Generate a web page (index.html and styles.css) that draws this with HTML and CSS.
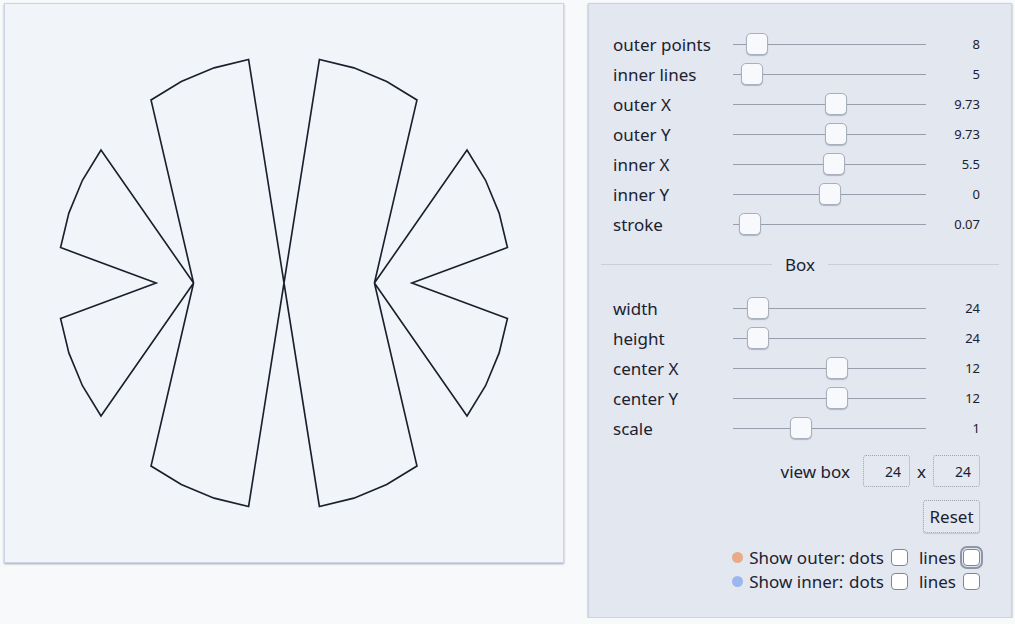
FILE: index.html
```html
<!DOCTYPE html>
<html lang="en">
<head>
<meta charset="utf-8">
<title>Star shape</title>
<link rel="stylesheet" href="styles.css">
</head>
<body>
<div class="app">
  <section class="canvas">
    <svg class="drawing" viewBox="0 0 24 24" xmlns="http://www.w3.org/2000/svg">
      <path class="shape" d="M12,12 L13.5221,2.3898 L15.0068,2.7462 L16.4173,3.3305 L17.7192,4.1282 L15.8891,12 L19.8718,6.2808 L20.6695,7.5827 L21.2538,8.9932 L21.6102,10.4779 L17.5,12 L21.6102,13.5221 L21.2538,15.0068 L20.6695,16.4173 L19.8718,17.7192 L15.8891,12 L17.7192,19.8718 L16.4173,20.6695 L15.0068,21.2538 L13.5221,21.6102 L12,12 L10.4779,21.6102 L8.9932,21.2538 L7.5827,20.6695 L6.2808,19.8718 L8.1109,12 L4.1282,17.7192 L3.3305,16.4173 L2.7462,15.0068 L2.3898,13.5221 L6.5,12 L2.3898,10.4779 L2.7462,8.9932 L3.3305,7.5827 L4.1282,6.2808 L8.1109,12 L6.2808,4.1282 L7.5827,3.3305 L8.9932,2.7462 L10.4779,2.3898 Z"/>
    </svg>
  </section>

  <aside class="controls">
    <div class="group">
      <label class="row"><span class="name">outer points</span><input class="slider" type="range" min="3" max="69" value="8"><span class="val">8</span></label>
      <label class="row"><span class="name">inner lines</span><input class="slider" type="range" min="3" max="45" value="5"><span class="val">5</span></label>
      <label class="row"><span class="name">outer X</span><input class="slider" type="range" min="0" max="18" step="0.01" value="9.73"><span class="val">9.73</span></label>
      <label class="row"><span class="name">outer Y</span><input class="slider" type="range" min="0" max="18" step="0.01" value="9.73"><span class="val">9.73</span></label>
      <label class="row"><span class="name">inner X</span><input class="slider" type="range" min="0" max="10.5" step="0.1" value="5.5"><span class="val">5.5</span></label>
      <label class="row"><span class="name">inner Y</span><input class="slider" type="range" min="-12" max="12" step="0.1" value="0"><span class="val">0</span></label>
      <label class="row"><span class="name">stroke</span><input class="slider" type="range" min="0" max="2" step="0.01" value="0.07"><span class="val">0.07</span></label>
    </div>

    <div class="divider"><span>Box</span></div>

    <div class="group">
      <label class="row"><span class="name">width</span><input class="slider" type="range" min="0" max="300" value="24"><span class="val">24</span></label>
      <label class="row"><span class="name">height</span><input class="slider" type="range" min="0" max="300" value="24"><span class="val">24</span></label>
      <label class="row"><span class="name">center X</span><input class="slider" type="range" min="0" max="22" value="12"><span class="val">12</span></label>
      <label class="row"><span class="name">center Y</span><input class="slider" type="range" min="0" max="22" value="12"><span class="val">12</span></label>
      <label class="row"><span class="name">scale</span><input class="slider" type="range" min="0" max="3" step="0.1" value="1"><span class="val">1</span></label>
    </div>

    <div class="viewbox">
      <span class="vb-label">view box</span>
      <input class="num" type="text" value="24">
      <span class="times">x</span>
      <input class="num" type="text" value="24">
    </div>

    <div class="actions">
      <button class="reset" type="button">Reset</button>
    </div>

    <div class="toggles">
      <span class="dot dot-outer"></span><span class="t-label">Show outer:</span><span class="t-word">dots</span><input class="check" type="checkbox"><span class="t-word t-lines">lines</span><input class="check focused" type="checkbox">
      <span class="dot dot-inner"></span><span class="t-label">Show inner:</span><span class="t-word">dots</span><input class="check" type="checkbox"><span class="t-word t-lines">lines</span><input class="check" type="checkbox">
    </div>
  </aside>
</div>
</body>
</html>
```

FILE: styles.css
```css
* { box-sizing: border-box; }

html, body {
  margin: 0;
  padding: 0;
  background: #f8f9fb;
  font-family: "Noto Sans", "Open Sans", sans-serif;
  color: #1c2130;
}

.app {
  display: flex;
  align-items: flex-start;
  gap: 24px;
  padding: 3px 0 0 4px;
}

.canvas {
  width: 560px;
  height: 560px;
  background: #f1f4f9;
  border: 1px solid #cbd4e2;
  box-shadow: 0 1px 2px rgba(60, 66, 80, 0.45);
}

.drawing {
  display: block;
  width: 558px;
  height: 558px;
}

.shape {
  fill: none;
  stroke: #1a1f2c;
  stroke-width: 0.07;
  stroke-linejoin: miter;
}

.controls {
  width: 424px;
  height: 615px;
  background: #e2e7f0;
  border: 1px solid #ccd3df;
  box-shadow: 0 1px 2px rgba(60, 66, 80, 0.45);
  padding: 25px 12px 0 12px;
}

.group {
  padding: 0 19px 0 12px;
}

.row {
  display: grid;
  grid-template-columns: 120px 193px 1fr;
  align-items: center;
  height: 30px;
  font-size: 17px;
}

.name {
  white-space: nowrap;
}

.val {
  text-align: right;
  font-size: 13px;
}

.slider {
  -webkit-appearance: none;
  appearance: none;
  margin: 0;
  width: 193px;
  height: 24px;
  background: transparent;
}

.slider::-webkit-slider-runnable-track {
  height: 1px;
  background: #989eab;
}

.slider::-webkit-slider-thumb {
  -webkit-appearance: none;
  appearance: none;
  width: 22px;
  height: 22px;
  margin-top: -11px;
  border-radius: 5px;
  background: #f8f9fc;
  border: 1px solid #a8afbd;
  box-shadow: 0 1px 1px rgba(80, 88, 104, 0.35);
}

.divider {
  display: flex;
  align-items: center;
  height: 54px;
  padding-bottom: 4px;
  font-size: 17px;
}

.divider::before,
.divider::after {
  content: "";
  flex: 1;
  height: 1px;
  background: #c9d0dc;
}

.divider span {
  padding: 0 13px;
}

.viewbox {
  display: flex;
  justify-content: flex-end;
  align-items: center;
  margin-top: 12px;
  padding-right: 19px;
  font-size: 17px;
}

.vb-label {
  margin-right: 13px;
}

.num {
  width: 47px;
  height: 32px;
  border: 1px dotted #9ba2b0;
  border-radius: 3px;
  background: #e4e9f1;
  font-family: inherit;
  font-size: 14px;
  color: #1c2130;
  text-align: right;
  padding: 0 8px 0 4px;
}

.times {
  margin: 0 7px;
}

.actions {
  display: flex;
  justify-content: flex-end;
  margin-top: 13px;
  padding-right: 19px;
}

.reset {
  width: 57px;
  height: 33px;
  border: 1px dotted #9ba2b0;
  border-radius: 3px;
  background: #e4e9f1;
  font-family: inherit;
  font-size: 17px;
  color: #1c2130;
  padding: 0;
  box-shadow: 0 1px 1px rgba(80, 88, 104, 0.2);
}

.toggles {
  display: grid;
  grid-template-columns: auto auto auto auto auto auto;
  grid-auto-rows: 24px;
  justify-content: end;
  align-items: center;
  margin-top: 12px;
  padding-right: 19px;
  font-size: 17px;
}

.dot {
  width: 11px;
  height: 11px;
  border-radius: 50%;
  margin-right: 6px;
}

.dot-outer { background: #e9aa88; }
.dot-inner { background: #9bb6f1; }

.t-label {
  margin-right: 4px;
}

.t-lines {
  margin-left: 11px;
  margin-right: 0;
}

.check {
  -webkit-appearance: none;
  appearance: none;
  width: 17px;
  height: 17px;
  margin: 0 0 0 7px;
  border: 1.5px solid #7e8696;
  border-radius: 4px;
  background: #ffffff;
}

.check.focused {
  outline: 2px solid #8e96a5;
  outline-offset: 1px;
}
```
